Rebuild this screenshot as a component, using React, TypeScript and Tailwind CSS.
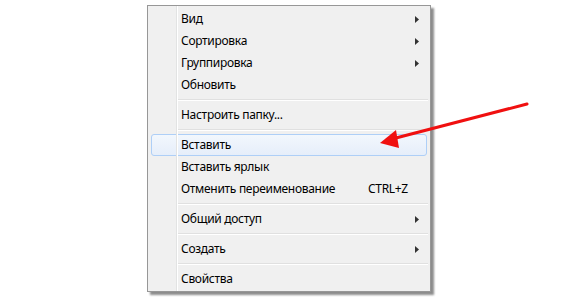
import React from "react";

type Item = { label: string; sub?: boolean; shortcut?: string; hover?: boolean } | "sep";

const items: Item[] = [
  { label: "Вид", sub: true },
  { label: "Сортировка", sub: true },
  { label: "Группировка", sub: true },
  { label: "Обновить" },
  "sep",
  { label: "Настроить папку..." },
  "sep",
  { label: "Вставить", hover: true },
  { label: "Вставить ярлык" },
  { label: "Отменить переименование", shortcut: "CTRL+Z" },
  "sep",
  { label: "Общий доступ", sub: true },
  "sep",
  { label: "Создать", sub: true },
  "sep",
  { label: "Свойства" },
];

function SubArrow() {
  return (
    <svg width="4" height="7" viewBox="0 0 4 7" className="block">
      <path d="M0 0 L4 3.5 L0 7 Z" fill="#333" />
    </svg>
  );
}

export default function App() {
  return (
    <div
      className="relative w-[564px] h-[300px] bg-white overflow-hidden"
      style={{ fontFamily: '"Segoe UI", "Noto Sans", sans-serif' }}
    >
      <div className="pt-[5px] pl-[147px]">
        <div className="relative w-[284px] border border-[#979797] bg-[#f0f0f0] pt-[2px] pb-[1px] shadow-[3px_3px_2px_rgba(0,0,0,0.45)]">
          <div className="absolute left-[28px] top-0 bottom-0 w-px bg-[#e2e3e3]" />
          <div className="absolute left-[29px] top-0 bottom-0 w-px bg-white" />
          {items.map((it, i) =>
            it === "sep" ? (
              <div key={i} className="h-[8px] flex flex-col justify-center pl-[30px] pr-[2px]">
                <div className="h-px bg-[#e0e0e0]" />
                <div className="h-px bg-white" />
              </div>
            ) : (
              <div
                key={i}
                className={
                  "h-[22px] mx-[3px] flex items-center text-[12px] tracking-[-0.3px] text-black border " +
                  (it.hover
                    ? "rounded-[3px] border-[#aecff7] bg-gradient-to-b from-[#f2f7fd] to-[#e6eefa]"
                    : "border-transparent")
                }
              >
                <span className="pl-[29px] flex-1 whitespace-nowrap">{it.label}</span>
                <span className="w-[47px] shrink-0 whitespace-nowrap">{it.shortcut ?? ""}</span>
                <span className="w-[11px] shrink-0 flex items-center">{it.sub && <SubArrow />}</span>
              </div>
            )
          )}
        </div>
      </div>
      <svg className="absolute left-0 top-0" width="564" height="300" viewBox="0 0 564 300">
        <line x1="527" y1="104" x2="392" y2="139" stroke="#f01010" strokeWidth="3" strokeLinecap="round" />
        <path d="M380 143 L396 130 L399 148 Z" fill="#f01010" />
      </svg>
    </div>
  );
}
